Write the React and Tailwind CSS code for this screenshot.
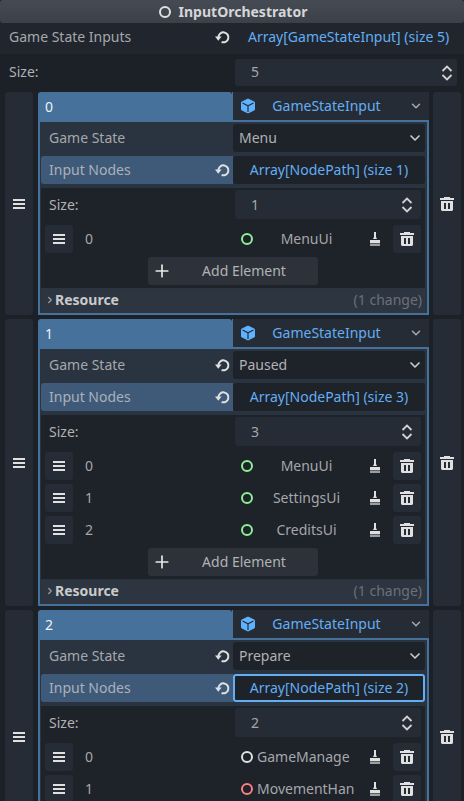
import { ChevronDown, ChevronRight, Plus } from "lucide-react";

const items = [
  {
    index: 0,
    state: "Menu",
    size: 1,
    stateReset: false,
    nodes: [{ name: "MenuUi", color: "#8eef97", wide: true }],
    resource: true,
  },
  {
    index: 1,
    state: "Paused",
    size: 3,
    stateReset: true,
    nodes: [
      { name: "MenuUi", color: "#8eef97", wide: true },
      { name: "SettingsUi", color: "#8eef97", wide: true },
      { name: "CreditsUi", color: "#8eef97", wide: true },
    ],
    resource: true,
  },
  {
    // runs off the bottom of the window, so the footer rows are left out
    index: 2,
    state: "Prepare",
    size: 2,
    stateReset: true,
    focused: true,
    nodes: [
      { name: "GameManage", color: "#e0e0e0" },
      { name: "MovementHan", color: "#fc7f7f" },
    ],
  },
];

function ResetIcon() {
  return (
    <svg width="16" height="16" viewBox="0 0 16 16" fill="none">
      <path d="M4.4 8A5 5 0 1 1 7.6 13" stroke="#e0e0e0" strokeWidth="2" />
      <path d="M1 7.6h6.6L4.3 11.8z" fill="#e0e0e0" />
    </svg>
  );
}

function BarsIcon() {
  return (
    <svg width="14" height="12" viewBox="0 0 14 12" fill="#e0e0e0">
      <rect x="1" y="1" width="12" height="2" />
      <rect x="1" y="5" width="12" height="2" />
      <rect x="1" y="9" width="12" height="2" />
    </svg>
  );
}

function TrashIcon() {
  return (
    <svg width="16" height="16" viewBox="0 0 16 16" fill="#e0e0e0">
      <path d="M5 1h6v1h4v2H1V2h4z" />
      <path d="M2 5h12v9l-1 1H3l-1-1zM5 7v6h2V7zm4 0v6h2V7z" fillRule="evenodd" />
    </svg>
  );
}

function BrushIcon() {
  return (
    <svg width="12" height="14" viewBox="0 0 12 14" fill="#e0e0e0">
      <path d="M5 0h2v5l1 2H4l1-2z" />
      <path d="M1 8h10v3H1z" />
      <path d="M1 11.5h10V14H1z" opacity="0.65" />
    </svg>
  );
}

function CubeIcon() {
  return (
    <svg width="16" height="16" viewBox="0 0 16 16">
      <path d="M8 1l6.5 3.2v7.6L8 15l-6.5-3.2V4.2z" fill="#5fb2ff" stroke="#5fb2ff" strokeLinejoin="round" />
      <path d="M2.5 5L8 7.8 13.5 5M8 7.8V14" fill="none" stroke="#262c35" strokeWidth="1.2" />
    </svg>
  );
}

function SpinArrows() {
  return (
    <svg width="12" height="16" viewBox="0 0 12 16" fill="none" stroke="#d0d2d4" strokeWidth="1.8">
      <path d="M1.5 6L6 1.5 10.5 6" />
      <path d="M1.5 10L6 14.5 10.5 10" />
    </svg>
  );
}

function NodeRing({ color }) {
  return <span className="h-3 w-3 shrink-0 rounded-full border-2" style={{ borderColor: color }} />;
}

function ElementRow({ index, node }) {
  return (
    <div className="flex h-7 items-center">
      <div className="flex h-7 w-7 items-center justify-center rounded-[3px] bg-[#262c35]">
        <BarsIcon />
      </div>
      <span className="ml-3 w-[156px] text-[#a5a7ab]">{index}</span>
      <NodeRing color={node.color} />
      <span className={node.wide ? "flex-1 pr-[6px] text-center text-[#a5a7ab]" : "ml-[4px] flex-1 text-[#a5a7ab]"}>
        {node.name}
      </span>
      <div className="flex w-[18px] justify-center">
        <BrushIcon />
      </div>
      <div className="ml-[9px] flex h-7 w-7 items-center justify-center rounded-[3px] bg-[#262c35]">
        <TrashIcon />
      </div>
    </div>
  );
}

function Item({ item }) {
  return (
    <div className={item.resource ? "flex pl-[5px]" : "flex h-[254px] pl-[5px]"}>
      <div className="flex w-7 shrink-0 items-center justify-center rounded-[3px] bg-[#262c35]">
        <BarsIcon />
      </div>

      <div className="ml-[5px] w-[391px] shrink-0">
        <div className="flex h-[30px]">
          <div className="flex h-[30px] w-[194px] items-center rounded-t-[3px] bg-[#45719b] pl-[7px] text-[#f0f2f4]">
            {item.index}
          </div>
          <div className="flex h-[30px] flex-1 items-center border-b-2 border-l border-[#45719b] bg-[#262c35] pl-[7px] pr-[6px] text-[#62aef5]">
            <CubeIcon />
            <span className="flex-1 pr-[12px] text-center">GameStateInput</span>
            <ChevronDown size={14} color="#a8abaf" strokeWidth={2.5} />
          </div>
        </div>

        <div className="border-x-2 border-b-2 border-[#45719b] bg-[#2a3440] pt-[2px]">
          <div className="flex h-7 items-center">
            <div className="flex w-[193px] items-center justify-between pl-[9px] pr-[3px] text-[#a5a7ab]">
              Game State
              {item.stateReset && <ResetIcon />}
            </div>
            <div className="flex h-7 w-[192px] items-center justify-between rounded-[3px] bg-[#1e2229] pl-[6px] pr-[2px] text-[#b0b2b5]">
              {item.state}
              <ChevronDown size={16} color="#c8cacc" strokeWidth={2.5} />
            </div>
          </div>

          <div className="mt-1 flex h-7 items-center">
            <div className="ml-px flex h-7 w-[192px] items-center justify-between rounded-l-[3px] bg-[#3f5a78] pl-2 pr-[3px] text-[#a9b1ba]">
              Input Nodes
              <ResetIcon />
            </div>
            <div
              className={
                item.focused
                  ? "flex h-7 w-[192px] items-center justify-center rounded-[3px] border-2 border-[#62aef5] bg-[#1e2229] text-[#62aef5]"
                  : "flex h-7 w-[192px] items-center justify-center rounded-[3px] bg-[#1e2229] text-[#62aef5]"
              }
            >
              Array[NodePath] (size {item.size})
            </div>
          </div>

          <div className="ml-px mr-[2px] mt-1 bg-[#1e2229] px-[4px] pb-[3px] pt-[2px]">
            <div className="flex h-[29px] items-center">
              <span className="w-[190px] pl-[4px] text-[#b0b2b5]">Size:</span>
              <div className="flex h-[29px] flex-1 items-center justify-between rounded-[3px] bg-[#262c35] pl-[16px] pr-[8px] text-[#a5a7ab]">
                {item.size}
                <SpinArrows />
              </div>
            </div>

            <div className="mt-[6px] flex flex-col gap-1">
              {item.nodes.map((node, i) => (
                <ElementRow key={node.name} index={i} node={node} />
              ))}
            </div>

            {item.resource && (
              <div className="mt-1 flex justify-center">
                <div className="flex h-7 w-[170px] items-center rounded-[3px] bg-[#2d323a] pl-[4px] text-[#b0b2b5]">
                  <Plus size={20} color="#e8e8e8" strokeWidth={2} />
                  <span className="flex-1 pr-[2px] text-center">Add Element</span>
                </div>
              </div>
            )}
          </div>

          {item.resource && (
            <div className="ml-px mr-[2px] mt-px flex h-6 items-center justify-between bg-[#2d3540] pb-[2px] pl-1 pr-[3px] text-[#6b7079]">
              <span className="flex items-center font-bold text-[#c8cacc]">
                <ChevronRight size={10} color="#9a9da1" strokeWidth={3} />
                <span>Resource</span>
              </span>
              (1 change)
            </div>
          )}
        </div>
      </div>

      <div className="ml-1 flex w-7 shrink-0 items-center justify-center rounded-[3px] bg-[#262c35]">
        <TrashIcon />
      </div>
    </div>
  );
}

export default function App() {
  return (
    <div className="h-[801px] w-[464px] overflow-hidden bg-[#21262e] font-['Noto_Sans',sans-serif] text-[14px] leading-5">
      <div className="flex h-[23px] items-center justify-center rounded-[3px] bg-gradient-to-b from-[#454a53] to-[#3c4149] pl-[2px] font-bold text-[#d5d6d8]">
        <span className="h-3 w-3 rounded-full border-2 border-[#e0e0e0]" />
        <span className="ml-[8px]">InputOrchestrator</span>
      </div>

      <div className="flex h-[31px] items-center pb-[3px]">
        <span className="w-[214px] pl-[9px] text-[#a5a7ab]">Game State Inputs</span>
        <ResetIcon />
        <span className="ml-[18px] text-[#62aef5]">Array[GameStateInput] (size 5)</span>
      </div>

      <div className="h-[747px] bg-[#1c2027] pt-[5px]">
        <div className="flex h-[27px] items-center pl-[9px] pr-[7px]">
          <span className="w-[226px] pb-[2px] text-[#b0b2b5]">Size:</span>
          <div className="flex h-[27px] flex-1 items-center justify-between rounded-[3px] bg-[#262c35] pl-[16px] pr-[4px] text-[#a5a7ab]">
            <span className="pb-[2px]">5</span>
            <SpinArrows />
          </div>
        </div>

        <div className="mt-[6px] flex flex-col gap-1">
          {items.map((item) => (
            <Item key={item.index} item={item} />
          ))}
        </div>
      </div>
    </div>
  );
}
